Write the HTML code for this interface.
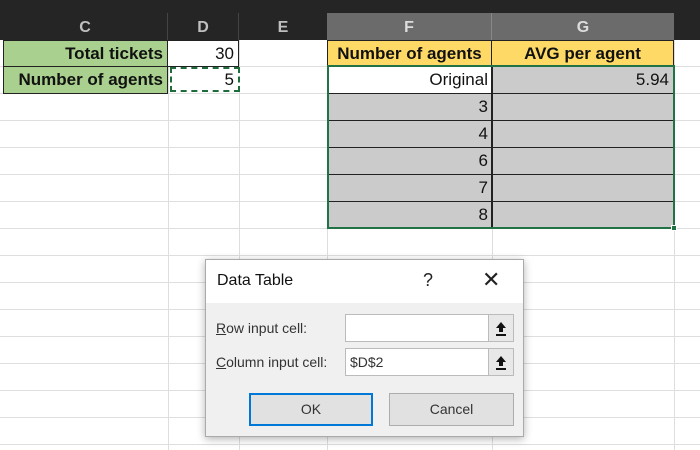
<!DOCTYPE html>
<html><head><meta charset="utf-8"><style>
*{margin:0;padding:0;box-sizing:border-box}
body{width:700px;height:450px;overflow:hidden;background:#fff;font-family:"Liberation Sans",sans-serif;position:relative}
.a{position:absolute}
.hl{position:absolute;left:0;width:700px;height:1px;background:#dedede}
.vl{position:absolute;top:40px;width:1px;height:410px;background:#dedede}
.hdr{position:absolute;top:13px;height:27px;color:#bfbfbf;font-size:16px;font-weight:bold;text-align:center;line-height:29px}
.c{position:absolute;font-size:17px;line-height:26px;text-align:right;padding-right:4px;color:#111}
.b{font-weight:bold}
.g{background:#cbcbcb}
</style></head><body>
<div class="a" style="left:0;top:0;width:700px;height:40px;background:#252525"></div>
<div class="hdr" style="left:3px;width:165px;border-right:1px solid #444">C</div>
<div class="hdr" style="left:168px;width:71px;border-right:1px solid #444">D</div>
<div class="hdr" style="left:239px;width:88px">E</div>
<div class="hdr" style="left:327px;width:165px;background:#6b6b6b;border-right:1px solid #888;color:#ddd">F</div>
<div class="hdr" style="left:492px;width:182px;background:#6b6b6b;color:#ddd">G</div>

<div class="hl" style="top:66px"></div><div class="hl" style="top:93px"></div>
<div class="hl" style="top:120px"></div><div class="hl" style="top:147px"></div>
<div class="hl" style="top:174px"></div><div class="hl" style="top:201px"></div>
<div class="hl" style="top:228px"></div><div class="hl" style="top:255px"></div>
<div class="hl" style="top:282px"></div><div class="hl" style="top:309px"></div>
<div class="hl" style="top:336px"></div><div class="hl" style="top:363px"></div>
<div class="hl" style="top:390px"></div><div class="hl" style="top:417px"></div>
<div class="hl" style="top:444px"></div>
<div class="vl" style="left:168px"></div><div class="vl" style="left:239px"></div>
<div class="vl" style="left:327px"></div><div class="vl" style="left:492px"></div>
<div class="vl" style="left:674px"></div>

<div class="c b" style="left:3px;top:40px;width:165px;height:27px;background:#a9d08e;border:1px solid #222">Total tickets</div>
<div class="c b" style="left:3px;top:66px;width:165px;height:28px;background:#a9d08e;border:1px solid #222">Number of agents</div>
<div class="c" style="left:168px;top:40px;width:71px;height:27px;background:#fff;border:1px solid #222;border-left:none">30</div>
<div class="c" style="left:170px;top:67px;width:70px;height:25px;background:#fff;border:2px dashed #1e6b3c;line-height:21px">5</div>

<div class="c b" style="left:327px;top:40px;width:165px;height:27px;background:#ffd966;border:1px solid #222;text-align:center;padding:0">Number of agents</div>
<div class="c b" style="left:491px;top:40px;width:183px;height:27px;background:#ffd966;border:1px solid #222;text-align:center;padding:0">AVG per agent</div>

<div class="c" style="left:328px;top:67px;width:164px;height:26px;background:#fff">Original</div>
<div class="c g" style="left:492px;top:67px;width:181px;height:26px">5.94</div>
<div class="c g" style="left:328px;top:93px;width:164px;height:27px;border-top:1px solid #222">3</div>
<div class="c g" style="left:328px;top:120px;width:164px;height:27px;border-top:1px solid #222">4</div>
<div class="c g" style="left:328px;top:147px;width:164px;height:27px;border-top:1px solid #222">6</div>
<div class="c g" style="left:328px;top:174px;width:164px;height:27px;border-top:1px solid #222">7</div>
<div class="c g" style="left:328px;top:201px;width:164px;height:27px;border-top:1px solid #222">8</div>
<div class="c g" style="left:492px;top:93px;width:181px;height:27px;border-top:1px solid #222"></div>
<div class="c g" style="left:492px;top:120px;width:181px;height:27px;border-top:1px solid #222"></div>
<div class="c g" style="left:492px;top:147px;width:181px;height:27px;border-top:1px solid #222"></div>
<div class="c g" style="left:492px;top:174px;width:181px;height:27px;border-top:1px solid #222"></div>
<div class="c g" style="left:492px;top:201px;width:181px;height:27px;border-top:1px solid #222"></div>
<div class="a" style="left:491px;top:67px;width:2px;height:161px;background:#222"></div>
<div class="a" style="left:327px;top:65px;width:348px;height:164px;border:2px solid #217346"></div>
<div class="a" style="left:671px;top:225px;width:6px;height:6px;background:#217346;border:1px solid #fff"></div>

<div class="a" style="left:205px;top:259px;width:319px;height:178px;background:#f0f0f0;border:1px solid #aaa;box-shadow:0 2px 8px rgba(0,0,0,.3)"></div>
<div class="a" style="left:206px;top:260px;width:317px;height:43px;background:#fff"></div>
<div class="a" style="left:217px;top:272px;font-size:16px;color:#111">Data Table</div>
<div class="a" style="left:423px;top:270px;font-size:18px;color:#222">?</div>
<div class="a" style="left:482px;top:267px;font-size:22px;color:#222">✕</div>
<div class="a" style="left:216px;top:320px;font-size:14px;color:#333"><u>R</u>ow input cell:</div>
<div class="a" style="left:216px;top:354px;font-size:14px;color:#333"><u>C</u>olumn input cell:</div>
<div class="a" style="left:345px;top:314px;width:144px;height:28px;background:#fff;border:1px solid #bbb"></div>
<div class="a" style="left:345px;top:348px;width:144px;height:28px;background:#fff;border:1px solid #bbb;font-size:14px;line-height:26px;padding-left:4px;color:#333">$D$2</div>
<div class="a" style="left:488px;top:314px;width:26px;height:28px;background:#e8e8e8;border:1px solid #bbb"><svg width="24" height="26" viewBox="0 0 24 26"><path d="M12 7 L7 13 H10 V17 H14 V13 H17 Z" fill="#111"/><rect x="7" y="19" width="10" height="2" fill="#111"/></svg></div>
<div class="a" style="left:488px;top:348px;width:26px;height:28px;background:#e8e8e8;border:1px solid #bbb"><svg width="24" height="26" viewBox="0 0 24 26"><path d="M12 7 L7 13 H10 V17 H14 V13 H17 Z" fill="#111"/><rect x="7" y="19" width="10" height="2" fill="#111"/></svg></div>
<div class="a" style="left:249px;top:393px;width:124px;height:33px;background:#e1e1e1;border:2px solid #0078d7;text-align:center;line-height:29px;font-size:14px;color:#333">OK</div>
<div class="a" style="left:389px;top:393px;width:125px;height:33px;background:#e1e1e1;border:1px solid #adadad;text-align:center;line-height:31px;font-size:14px;color:#333">Cancel</div>
</body></html>
